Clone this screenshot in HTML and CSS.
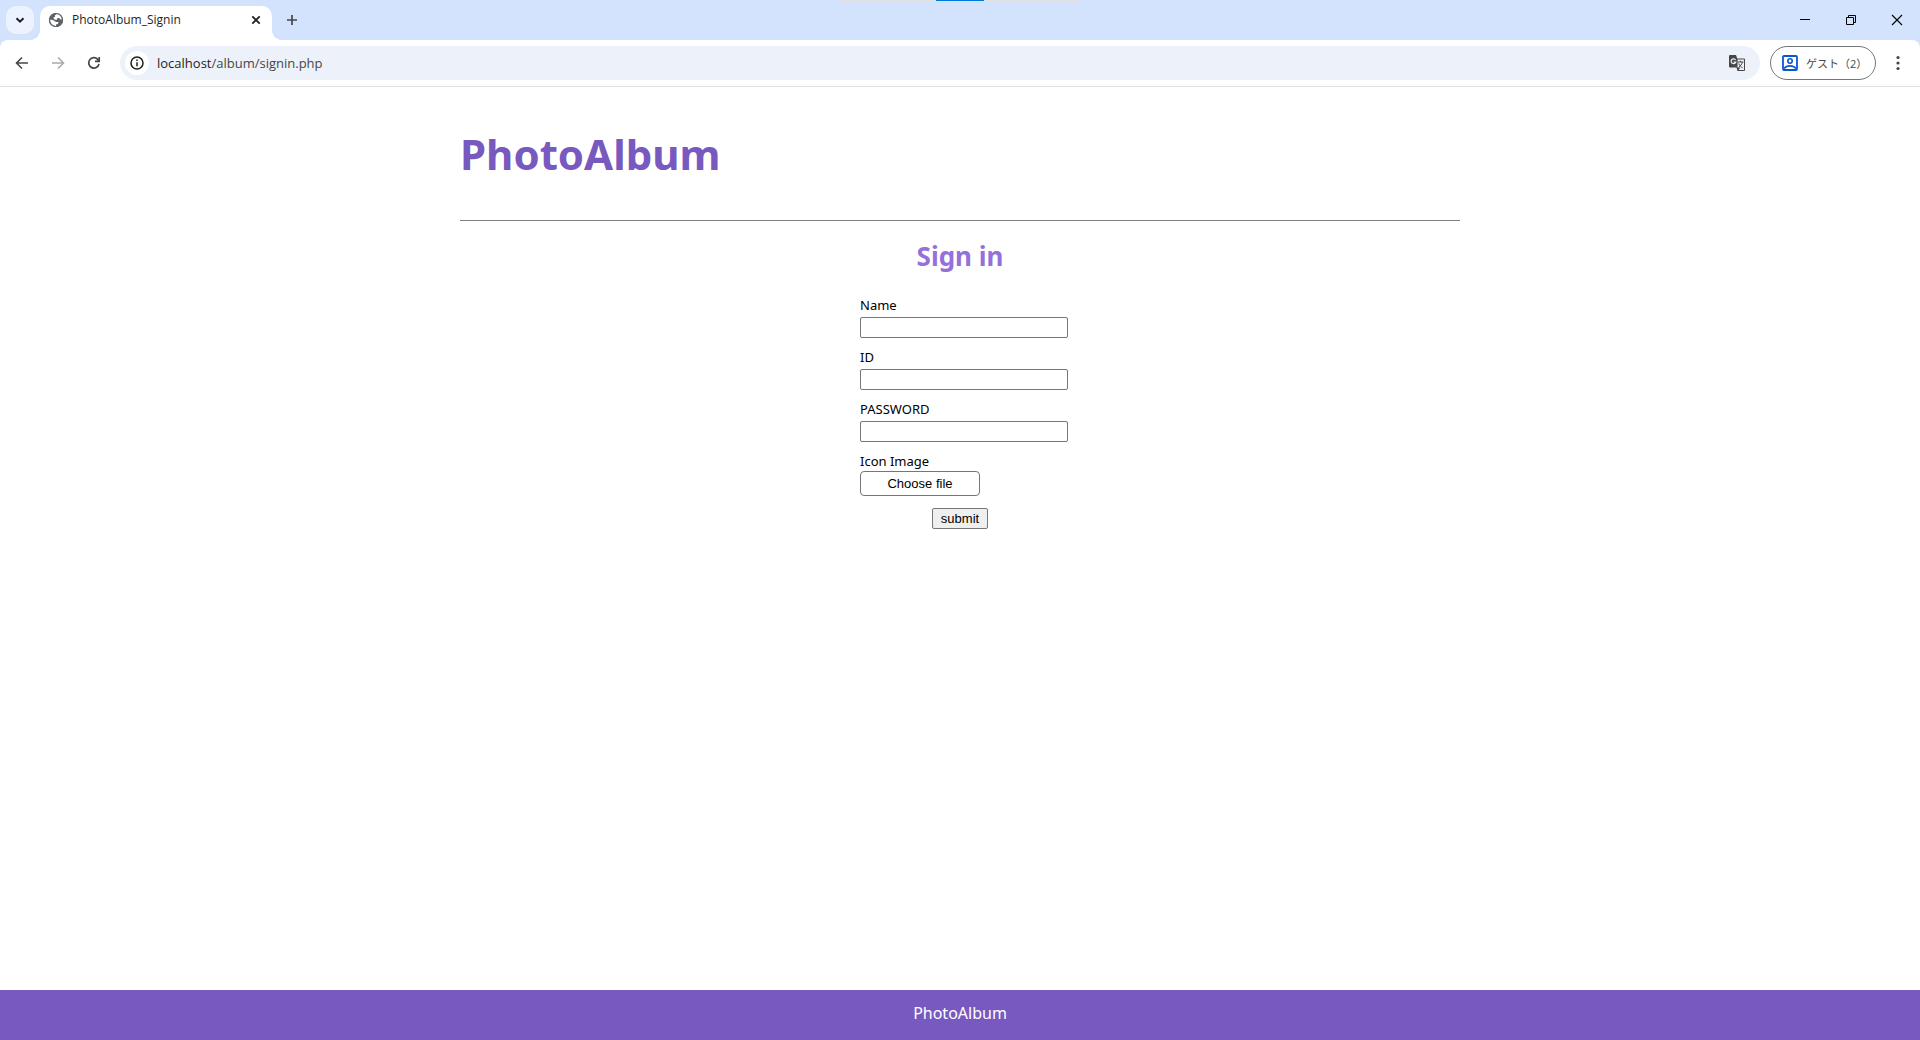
FILE: index.html
```html
<!DOCTYPE html>
<html lang="en">
<head>
<meta charset="utf-8">
<title>PhotoAlbum_Signin</title>
<link rel="stylesheet" href="styles.css">
</head>
<body>
<div class="browser">
  <div class="tabstrip">
    <span class="snap"></span>
    <button class="tab-search" aria-label="Search tabs"><svg width="28" height="28" viewBox="0 0 28 28"><path d="M10.5 12.2l3.5 3.5 3.5-3.5" fill="none" stroke="#1f1f1f" stroke-width="2"/></svg></button>
    <div class="tab">
      <svg width="16" height="16" viewBox="0 0 16 16"><circle cx="8" cy="8" r="7" fill="#5f6368"/><path d="M7 3.2L9.6 1.4C12.4 2 14.2 4.5 14.2 7.4L12 7.2 11.3 6H9.5L8.6 8 6.5 7.5 5.2 5.4 7 5zM1.8 7.6L5.4 8.2 8 10H10.6L9.8 12 8 12.5V14.2C4.5 14.2 1.8 11.5 1.8 7.6z" fill="#fff"/><circle cx="8" cy="8" r="6.5" fill="none" stroke="#5f6368" stroke-width="1.2"/></svg>
      <span class="tab-title">PhotoAlbum_Signin</span>
      <button class="plain" aria-label="Close tab"><svg width="16" height="16" viewBox="0 0 16 16"><path d="M4.3 4.3l7.4 7.4M11.7 4.3l-7.4 7.4" stroke="#1f1f1f" stroke-width="1.8"/></svg></button>
    </div>
    <button class="plain new-tab" aria-label="New tab"><svg width="20" height="20" viewBox="0 0 20 20"><path d="M10 5v10M5 10h10" stroke="#474747" stroke-width="1.7"/></svg></button>
    <div class="window-controls">
      <button class="plain" aria-label="Minimize"><svg width="46" height="40" viewBox="0 0 46 40"><path d="M18 19.5h10" stroke="#000"/></svg></button>
      <button class="plain" aria-label="Restore"><svg width="46" height="40" viewBox="0 0 46 40"><path d="M18.500 17.500h7v7h-7zM20.500 17.500v-2h7v7h-2" fill="none" stroke="#000"/></svg></button>
      <button class="plain" aria-label="Close"><svg width="46" height="40" viewBox="0 0 46 40"><path d="M18 15l10 10M28 15l-10 10" stroke="#000" stroke-width="1.100"/></svg></button>
    </div>
  </div>
  <div class="toolbar">
    <button class="plain" aria-label="Back"><svg width="20" height="20" viewBox="0 0 20 20"><path d="M16 10H5M10 4.500L4.500 10l5.500 5.500" fill="none" stroke="#474747" stroke-width="1.600"/></svg></button>
    <button class="plain" aria-label="Forward"><svg width="20" height="20" viewBox="0 0 20 20"><path d="M4 10h11M10 4.500l5.500 5.500-5.500 5.500" fill="none" stroke="#ababab" stroke-width="1.600"/></svg></button>
    <button class="plain" aria-label="Reload"><svg width="20" height="20" viewBox="0 0 20 20"><path d="M15 11a5.200 5.200 0 1 1-1.300-4.700L15.500 8M15.200 4v4.300H11" fill="none" stroke="#474747" stroke-width="1.700"/></svg></button>
    <div class="omnibox">
      <span class="site-info"><svg width="16" height="16" viewBox="0 0 16 16"><circle cx="8" cy="8" r="6" fill="none" stroke="#1f1f1f" stroke-width="1.500"/><path d="M8 7.200v4M8 4.500v1.500" stroke="#1f1f1f" stroke-width="1.500"/></svg></span>
      <span class="url"><span class="host">localhost</span>/album/signin.php</span>
      <svg width="18" height="18" viewBox="0 0 18 18"><path d="M2 1h6l1.200 3.500H16a1 1 0 0 1 1 1V16a1 1 0 0 1-1 1H9.500L8.500 13.500H2a1 1 0 0 1-1-1V2a1 1 0 0 1 1-1z" fill="#474747"/><path d="M9.600 5.500H16V16H10.500l2-2.500H9.500z" fill="#edf1fa"/><path d="M7.600 6A2.400 2.400 0 1 0 7.800 8H5.500" fill="none" stroke="#edf1fa" stroke-width="1.200"/><path d="M9.500 8h6M12.300 6.800V8M14.300 8.200c-.5 2.200-2 3.800-3.600 5M10.700 9.500c.8 1.800 2 3.200 3.900 4.300" fill="none" stroke="#474747" stroke-width="1"/></svg>
    </div>
    <button class="profile"><svg width="20" height="20" viewBox="0 0 20 20"><rect x="3" y="3" width="14" height="14" rx="1" fill="none" stroke="#0b57d0" stroke-width="1.800"/><circle cx="10" cy="8" r="2.200" fill="none" stroke="#0b57d0" stroke-width="1.600"/><path d="M4 15.500c3-3.500 9-3.500 12 0" fill="none" stroke="#0b57d0" stroke-width="1.800"/></svg><span>ゲスト（2）</span></button>
    <button class="plain" aria-label="Menu"><svg width="20" height="20" viewBox="0 0 20 20"><g fill="#474747"><circle cx="10" cy="4.500" r="1.600"/><circle cx="10" cy="10" r="1.600"/><circle cx="10" cy="15.500" r="1.600"/></g></svg></button>
  </div>
</div>
<main class="page">
  <h1>PhotoAlbum</h1>
  <hr>
  <h2>Sign in</h2>
  <form class="form">
    <div class="field"><label for="name">Name</label><input id="name" type="text"></div>
    <div class="field"><label for="uid">ID</label><input id="uid" type="text"></div>
    <div class="field"><label for="pw">PASSWORD</label><input id="pw" type="password"></div>
    <div class="field file"><label for="choose">Icon Image</label><button id="choose" class="choose" type="button">Choose file</button></div>
    <button class="submit" type="submit">submit</button>
  </form>
</main>
<footer class="footer">PhotoAlbum</footer>
</body>
</html>
```
FILE: styles.css
```css
* { box-sizing: border-box; }
body {
  margin: 0;
  min-height: 100vh;
  display: flex;
  flex-direction: column;
  background: #fff;
  font-family: "Noto Sans", "Noto Sans CJK JP", sans-serif;
  font-size: 13px;
  color: #000;
}
svg { display: block; flex: none; }
button { font-family: inherit; }
.plain { border: 0; padding: 0; background: none; }

.browser { background: #d3e3fd; font-family: "Open Sans", "Noto Sans CJK JP", sans-serif; }
.tabstrip { position: relative; display: flex; height: 40px; padding-left: 6px; align-items: center; }
.snap {
  position: absolute;
  top: 0;
  left: 50%;
  width: 240px;
  height: 1px;
  margin-left: -120px;
  background: linear-gradient(to right, #e3e3e3 96px, #0078d7 96px, #0078d7 144px, #e3e3e3 144px);
}
.tab-search { width: 28px; height: 28px; padding: 0; border: 0; border-radius: 10px; background: #ecf2fe; }
.tab {
  position: relative;
  display: flex;
  align-items: center;
  align-self: flex-end;
  width: 232px;
  height: 34px;
  margin-left: 6px;
  padding: 0 8px 6px;
  border-radius: 10px 10px 0 0;
  background: #fff;
}
.tab::before, .tab::after { content: ""; position: absolute; bottom: 0; width: 10px; height: 10px; }
.tab::before { left: -10px; background: radial-gradient(circle at 0 0, transparent 10px, #fff 10px); }
.tab::after { right: -10px; background: radial-gradient(circle at 100% 0, transparent 10px, #fff 10px); }
.tab-title { flex: 1; margin-left: 8px; font-size: 12px; line-height: 18px; color: #1f1f1f; }
.new-tab { margin-left: 10px; }
.window-controls { display: flex; margin-left: auto; }

.toolbar {
  display: flex;
  align-items: center;
  gap: 16px;
  height: 47px;
  padding: 0 12px;
  border-bottom: 1px solid #dfe1e5;
  border-radius: 8px 8px 0 0;
  background: #fff;
}
.omnibox {
  flex: 1;
  display: flex;
  align-items: center;
  height: 34px;
  margin-right: -6px;
  padding: 0 14px 0 5px;
  border-radius: 17px;
  background: #edf1fa;
}
.site-info { display: grid; place-items: center; width: 24px; height: 24px; border-radius: 50%; background: #fff; }
.url { flex: 1; margin-left: 8px; font-size: 13px; color: #474747; }
.host { color: #1f1f1f; }
.profile {
  display: flex;
  align-items: center;
  gap: 6px;
  width: 106px;
  height: 34px;
  margin-right: -4px;
  padding: 0 0 0 9px;
  border: 1px solid #747775;
  border-radius: 17px;
  background: #fff;
  color: #474747;
  font-size: 11px;
  white-space: nowrap;
}

.page { flex: 1; width: 100%; max-width: 1000px; margin: 0 auto; }
h1 { margin: 35px 0 34px; font-size: 42px; line-height: 64px; color: #7859c0; }
hr { margin: 0; border: 0; border-top: 1px solid #808080; }
h2 { margin: 15px 0 21px; font-size: 26px; line-height: 40px; text-align: center; color: #9370db; }
.form { width: 200px; margin: 0 auto; }
.field { display: flex; flex-direction: column; height: 52px; }
.field label { line-height: 16px; margin-bottom: 4px; }
.field input { width: 208px; height: 21px; padding: 1px 2px; border: 1px solid #767676; border-radius: 2px; background: #fff; }
.file label { margin-bottom: 2px; }
.choose {
  width: 120px;
  height: 25px;
  padding: 0;
  border: 1px solid #767676;
  border-radius: 4px;
  background: #fff;
  font: 13px "Liberation Sans", Arial, sans-serif;
  color: #000;
}
.submit {
  display: block;
  width: 56px;
  height: 21px;
  margin: 3px auto 0;
  padding: 0;
  border: 1px solid #767676;
  border-radius: 2px;
  background: #efefef;
  font: 13px "Liberation Sans", Arial, sans-serif;
  color: #000;
}
.footer { height: 50px; background: #7859c0; color: #fff; font-size: 16px; line-height: 46px; text-align: center; }
```
